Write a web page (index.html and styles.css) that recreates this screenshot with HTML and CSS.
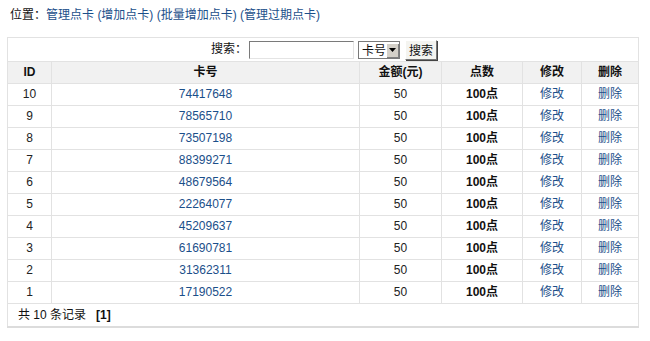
FILE: index.html
```html
<!DOCTYPE html>
<html>
<head>
<meta charset="utf-8">
<link rel="stylesheet" href="styles.css">
</head>
<body>
<div class="crumb">位置：<a href="#">管理点卡</a> <a href="#">(增加点卡)</a> <a href="#">(批量增加点卡)</a> <a href="#">(管理过期点卡)</a></div>
<table class="list">
  <colgroup>
    <col class="c-id"><col class="c-no"><col class="c-amt"><col class="c-pt"><col class="c-edit"><col class="c-del">
  </colgroup>
  <tr class="search-row">
    <td colspan="6">
      <form class="search">
        <label>搜索：</label>
        <input class="kw" type="text">
        <span class="sel">
          <select class="field"><option>卡号</option></select>
          <span class="arrow"><svg width="7" height="4" viewBox="0 0 7 4"><path d="M0 0H7L3.5 4Z" fill="#000"/></svg></span>
        </span>
        <button class="btn" type="button">搜索</button>
      </form>
    </td>
  </tr>
  <tr class="head">
    <th>ID</th><th>卡号</th><th>金额(元)</th><th>点数</th><th>修改</th><th>删除</th>
  </tr>
  <tr><td>10</td><td><a href="#">74417648</a></td><td>50</td><td class="pt">100点</td><td><a href="#">修改</a></td><td><a href="#">删除</a></td></tr>
  <tr><td>9</td><td><a href="#">78565710</a></td><td>50</td><td class="pt">100点</td><td><a href="#">修改</a></td><td><a href="#">删除</a></td></tr>
  <tr><td>8</td><td><a href="#">73507198</a></td><td>50</td><td class="pt">100点</td><td><a href="#">修改</a></td><td><a href="#">删除</a></td></tr>
  <tr><td>7</td><td><a href="#">88399271</a></td><td>50</td><td class="pt">100点</td><td><a href="#">修改</a></td><td><a href="#">删除</a></td></tr>
  <tr><td>6</td><td><a href="#">48679564</a></td><td>50</td><td class="pt">100点</td><td><a href="#">修改</a></td><td><a href="#">删除</a></td></tr>
  <tr><td>5</td><td><a href="#">22264077</a></td><td>50</td><td class="pt">100点</td><td><a href="#">修改</a></td><td><a href="#">删除</a></td></tr>
  <tr><td>4</td><td><a href="#">45209637</a></td><td>50</td><td class="pt">100点</td><td><a href="#">修改</a></td><td><a href="#">删除</a></td></tr>
  <tr><td>3</td><td><a href="#">61690781</a></td><td>50</td><td class="pt">100点</td><td><a href="#">修改</a></td><td><a href="#">删除</a></td></tr>
  <tr><td>2</td><td><a href="#">31362311</a></td><td>50</td><td class="pt">100点</td><td><a href="#">修改</a></td><td><a href="#">删除</a></td></tr>
  <tr><td>1</td><td><a href="#">17190522</a></td><td>50</td><td class="pt">100点</td><td><a href="#">修改</a></td><td><a href="#">删除</a></td></tr>
  <tr class="foot">
    <td colspan="6">共 10 条记录<b>[1]</b></td>
  </tr>
</table>
</body>
</html>
```
FILE: styles.css
```css
body {
  margin: 0;
  background: #fff;
  font-family: "Liberation Sans", "Noto Sans CJK SC", sans-serif;
  font-size: 12px;
  color: #222;
}
a {
  color: #1b4f8a;
  text-decoration: none;
}
.crumb {
  padding: 7px 0 0 10px;
  height: 22px;
  line-height: 16px;
  color: #111;
}
.list {
  margin: 8px 0 0 7px;
  width: 631px;
  border-collapse: collapse;
  border: 1px solid #d6d6d6;
  border-bottom: 2px solid #dcdcdc;
  table-layout: fixed;
}
.c-id { width: 44px; }
.c-no { width: 308px; }
.c-amt { width: 82px; }
.c-pt { width: 81px; }
.c-edit { width: 59px; }
.c-del { width: 57px; }
.list td, .list th {
  height: 21px;
  padding: 0;
  text-align: center;
  border: 1px solid #e2e2e2;
  line-height: 21px;
  white-space: nowrap;
}
.search-row td {
  height: 23px;
}
.search {
  display: flex;
  justify-content: center;
  align-items: center;
  margin: 0;
  padding-left: 2px;
}
.search label {
  color: #111;
  margin-right: 2px;
}
.kw {
  width: 101px;
  height: 14px;
  margin: 0 4px 0 0;
  padding: 1px;
  border: 1px solid #7a7a7a;
  border-right-color: #e4e4e4;
  border-bottom-color: #e4e4e4;
  background: #fff;
}
.sel {
  position: relative;
  display: inline-block;
  width: 42px;
  height: 18px;
  margin-right: 5px;
}
.field {
  appearance: none;
  -webkit-appearance: none;
  width: 42px;
  height: 18px;
  margin: 0;
  padding: 0 0 0 3px;
  font: 12px "Noto Sans CJK SC", sans-serif;
  line-height: 16px;
  color: #111;
  border: 1px solid #7a7a7a;
  border-radius: 0;
  background: #fff;
}
.arrow {
  position: absolute;
  right: 2px;
  top: 2px;
  width: 12px;
  height: 14px;
  background: #d4d0c8;
  border-top: 1px solid #fff;
  border-left: 1px solid #fff;
  box-sizing: border-box;
  box-shadow: 1px 1px 0 #808080;
  display: flex;
  align-items: center;
  justify-content: center;
}
.btn {
  height: 20px;
  width: 32px;
  padding: 0;
  font: 12px "Noto Sans CJK SC", sans-serif;
  color: #111;
  background: #f4f4f0;
  border: 1px solid #fff;
  border-right-color: #777;
  border-bottom-color: #777;
  box-shadow: 1px 1px 0 #444;
}
.head th {
  background: #f1f1f1;
  font-weight: bold;
  color: #111;
}
.pt {
  font-weight: bold;
  color: #111;
}
.foot td {
  height: 22px;
  text-align: left;
  padding-left: 10px;
  color: #111;
}
.foot b {
  margin-left: 10px;
}
```
